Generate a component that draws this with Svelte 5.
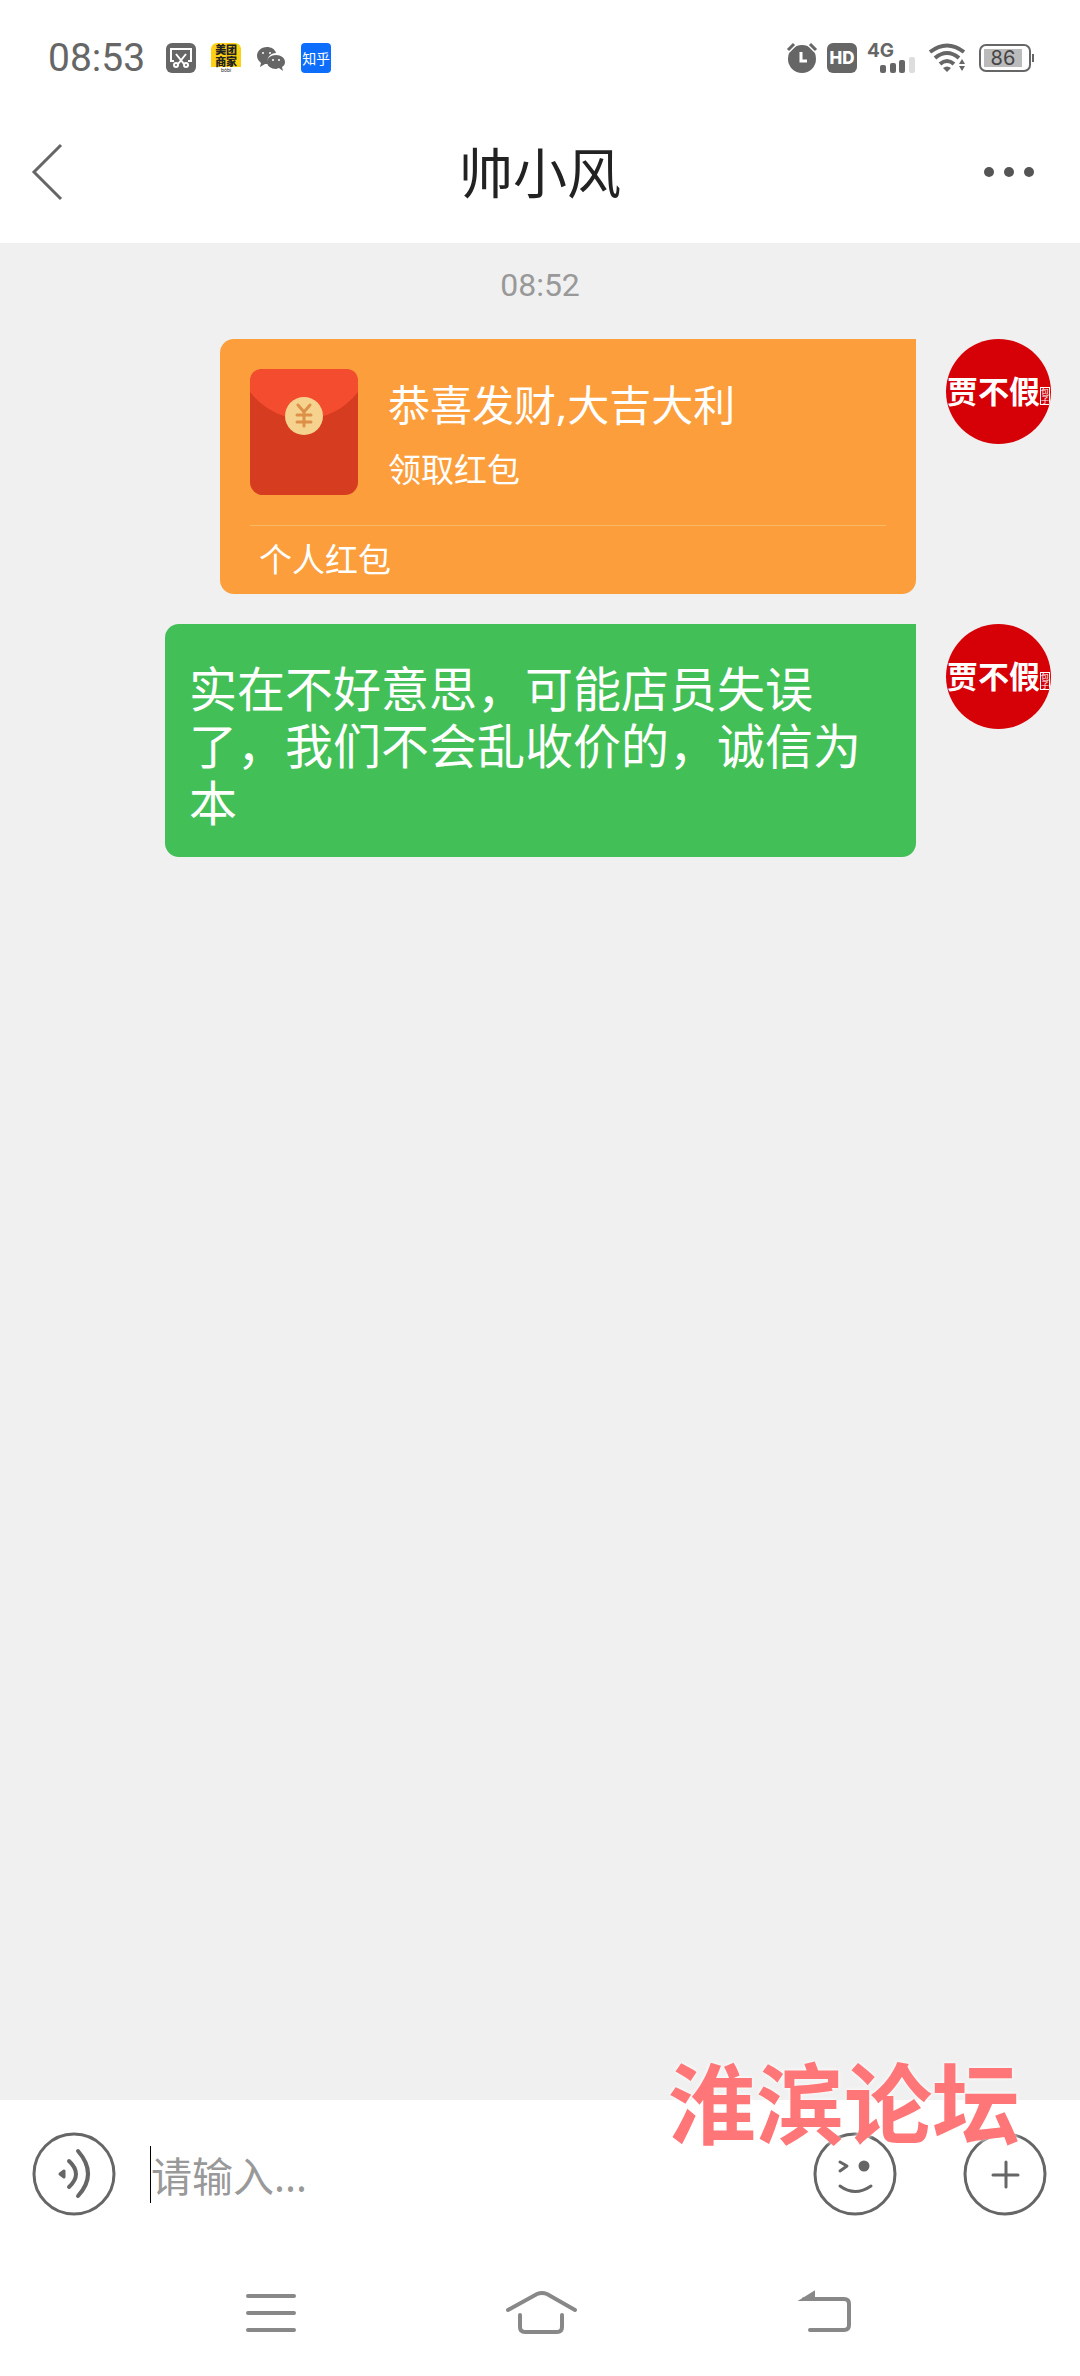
<script lang="ts">
	const contact = '帅小风';
	const message = '实在不好意思，可能店员失误了，我们不会乱收价的，诚信为本';

	let draft = $state('');
</script>

{#snippet avatar()}
	<div class="avatar">
		<span class="brand">贾不假</span>
		<span class="seal"><span>包</span><span>子</span></span>
	</div>
{/snippet}

<div class="phone">
	<div class="status">
		<span class="clock">08:53</span>
		<div class="notices">
			<svg width="30" height="30" viewBox="0 0 30 30">
				<rect width="30" height="30" rx="6" fill="#666" />
				<g fill="none" stroke="#fff" stroke-width="2">
					<path d="M8 18H5V6H25V18H22" />
					<path d="M10 11L18 21M20 11L12 21" />
					<circle cx="10" cy="22" r="2" />
					<circle cx="20" cy="22" r="2" />
				</g>
			</svg>
			<span class="yellow-app"><b>美团<br />商家</b><small>bóbi</small></span>
			<svg width="30" height="30" viewBox="0 0 30 30">
				<path fill="#666" d="M11 4C5 4 1 8 1 13c0 3 2 5 4 7l-1 4 5-3h3c-2-7 3-11 8-11C19 6 15 4 11 4z" />
				<path fill="#666" d="M20 12c-5 0-9 3-9 7s4 7 9 7l3-1 4 3-1-4c2-1 3-3 3-5 0-4-4-7-9-7z" />
				<g fill="#fff">
					<circle cx="7" cy="10" r="1" />
					<circle cx="14" cy="10" r="1" />
					<circle cx="17" cy="17" r="1" />
					<circle cx="23" cy="17" r="1" />
				</g>
			</svg>
			<span class="blue-app">知乎</span>
		</div>

		<div class="system">
			<svg width="30" height="32" viewBox="0 0 30 32">
				<circle cx="15" cy="17" r="14" fill="#666" />
				<path d="M1 8L7 2M29 8L23 2" stroke="#fff" stroke-width="6" />
				<path d="M1 8L7 2M29 8L23 2" stroke="#666" stroke-width="3" />
				<path d="M14 10V19H20" fill="none" stroke="#fff" stroke-width="3" />
			</svg>
			<span class="hd">HD</span>
			<svg class="signal" width="48" height="32" viewBox="0 0 48 32">
				<text x="0" y="15" font-size="19" font-weight="700" fill="#666">4G</text>
				<rect x="13" y="23" width="6" height="8" rx="2" fill="#666" />
				<rect x="23" y="21" width="6" height="10" rx="2" fill="#666" />
				<rect x="32" y="18" width="6" height="13" rx="2" fill="#666" />
				<rect x="42" y="15" width="6" height="16" rx="2" fill="#ddd" />
			</svg>
			<svg class="wifi" width="38" height="30" viewBox="0 0 38 30">
				<g fill="none" stroke="#666" stroke-width="4">
					<path d="M1 9Q18-4 35 9" />
					<path d="M6 15Q18 5 30 15" />
					<path d="M11 21Q18 15 25 21" />
				</g>
				<path fill="#666" d="M14 25q4-3 8 0l-4 4zM30 21l3-5 3 5zM30 23h6l-3 5z" />
			</svg>
			<span class="battery"><span class="level">86</span></span>
		</div>
	</div>

	<header>
		<button class="back" aria-label="返回">
			<svg width="34" height="60" viewBox="0 0 34 60">
				<path d="M31 2L4 29L31 56" fill="none" stroke="#666" stroke-width="3" />
			</svg>
		</button>
		<h1>{contact}</h1>
		<button class="more" aria-label="更多">
			<svg width="50" height="12" viewBox="0 0 50 12" fill="#555">
				<circle cx="5" cy="5" r="5" />
				<circle cx="25" cy="5" r="5" />
				<circle cx="45" cy="5" r="5" />
			</svg>
		</button>
	</header>

	<main>
		<time>08:52</time>

		<div class="row">
			<button class="packet">
				<span class="packet-top">
					<svg width="108" height="126" viewBox="0 0 108 126">
						<rect width="108" height="126" rx="13" fill="#d63c1f" />
						<path d="M0 23V13Q0 0 13 0H95Q108 0 108 13V23C80 59 28 59 0 23z" fill="#f44c2f" />
						<circle cx="54" cy="47" r="19" fill="#f6d28f" />
						<path
							d="M48 36L54 43L60 36M54 43V57M47 46H61M47 53H61"
							fill="none"
							stroke="#dd9048"
							stroke-width="3"
							stroke-linecap="round"
						/>
					</svg>
					<span class="packet-text">
						<span class="wish">恭喜发财,大吉大利</span>
						<span class="action">领取红包</span>
					</span>
				</span>
				<span class="kind">个人红包</span>
			</button>
			{@render avatar()}
		</div>

		<div class="row">
			<p class="bubble">{message}</p>
			{@render avatar()}
		</div>
	</main>

	<footer>
		<div class="watermark">淮滨论坛</div>
		<button aria-label="语音">
			<svg width="84" height="84" viewBox="0 0 84 84">
				<circle cx="42" cy="42" r="40" />
				<path class="solid" d="M28 42L32 39V45z" />
				<path d="M37 29Q51 42 37 55M46 19Q66 42 46 64" stroke-width="4" />
			</svg>
		</button>
		<label class="entry">
			<span class="caret"></span>
			<input type="text" placeholder="请输入..." aria-label="请输入" bind:value={draft} />
		</label>
		<button class="emoji" aria-label="表情">
			<svg width="84" height="84" viewBox="0 0 84 84">
				<circle cx="42" cy="42" r="40" />
				<path d="M27 30L34 34L27 39M27 54Q42 65 58 54" />
				<circle class="solid" cx="51" cy="34" r="4" />
			</svg>
		</button>
		<button aria-label="添加">
			<svg width="84" height="84" viewBox="0 0 84 84">
				<circle cx="42" cy="42" r="40" />
				<path d="M43 30V55M30 43H55" />
			</svg>
		</button>
	</footer>

	<nav>
		<button aria-label="最近任务">
			<svg width="72" height="46" viewBox="0 0 72 46">
				<path d="M20 7H66M20 24H66M20 41H66" />
			</svg>
		</button>
		<button aria-label="主页">
			<svg width="72" height="46" viewBox="0 0 72 46">
				<path d="M4 21L33 5Q38 3 43 5L71 21M16 26V38Q16 43 21 43H53Q58 43 58 38V26" />
			</svg>
		</button>
		<button aria-label="返回上一级">
			<svg width="72" height="46" viewBox="0 0 72 46">
				<path d="M24 10H64Q69 10 69 15V36Q69 41 64 41H30" />
				<path class="head" d="M21 11L34 3V11z" />
			</svg>
		</button>
	</nav>
</div>

<style>
	:global(body) {
		margin: 0;
	}
	.phone {
		min-height: 100vh;
		display: flex;
		flex-direction: column;
		background: #fff;
		font-family: 'Noto Sans', 'Noto Sans CJK SC', sans-serif;
	}
	button {
		padding: 0;
		border: 0;
		background: none;
		color: inherit;
		font: inherit;
	}
	svg {
		display: block;
		overflow: visible;
	}

	.status {
		display: flex;
		align-items: center;
		height: 116px;
		padding: 0 49px 0 48px;
		color: #666;
		font-family: Inter, sans-serif;
	}
	.clock {
		font-family: Roboto, sans-serif;
		font-size: 39px;
	}
	.notices,
	.system {
		display: flex;
		align-items: center;
	}
	.notices {
		gap: 15px;
		margin-left: 21px;
	}
	.yellow-app {
		display: flex;
		flex-direction: column;
		width: 30px;
		height: 30px;
		text-align: center;
		color: #222;
	}
	.yellow-app b {
		border-radius: 6px 6px 0 0;
		background: #fcd116;
		font: 900 11px/12px 'Noto Sans CJK SC', sans-serif;
	}
	.yellow-app small {
		font-size: 5px;
		line-height: 6px;
	}
	.blue-app {
		width: 30px;
		border-radius: 4px;
		background: #0d6efc;
		color: #fff;
		font: 14px/30px 'Noto Sans CJK SC', sans-serif;
		text-align: center;
	}
	.system {
		margin-left: auto;
		gap: 10px;
	}
	.hd {
		width: 30px;
		border-radius: 6px;
		background: #666;
		color: #fff;
		font-size: 17px;
		font-weight: 800;
		line-height: 30px;
		text-align: center;
	}
	.signal {
		margin-right: 4px;
	}
	.wifi {
		margin-right: 2px;
	}
	.battery {
		position: relative;
		box-sizing: border-box;
		width: 52px;
		height: 28px;
		padding: 3px;
		border: 2px solid #666;
		border-radius: 7px;
	}
	.battery::after {
		content: '';
		position: absolute;
		top: 8px;
		right: -5px;
		width: 2px;
		height: 8px;
		background: #666;
	}
	.level {
		display: block;
		width: 38px;
		background: #bbb;
		color: #444;
		font-size: 20px;
		line-height: 18px;
		text-align: center;
	}

	header {
		display: grid;
		grid-template-columns: 1fr auto 1fr;
		align-items: center;
		height: 113px;
		padding: 0 46px 14px 30px;
	}
	.back {
		justify-self: start;
	}
	.more {
		justify-self: end;
	}
	h1 {
		margin: 0;
		padding-left: 16px;
		color: #222;
		font-size: 54px;
		font-weight: 400;
		line-height: 80px;
	}

	main {
		flex: 1;
		display: flex;
		flex-direction: column;
		gap: 30px;
		padding: 18px 29px 20px 165px;
		background: #f0f0f0;
	}
	time {
		margin-left: -136px;
		color: #999;
		font-family: Roboto, sans-serif;
		font-size: 32px;
		line-height: 48px;
		text-align: center;
	}
	.row {
		display: flex;
		align-items: flex-start;
		justify-content: flex-end;
		gap: 30px;
	}
	.packet {
		width: 696px;
		padding: 30px 30px 0;
		border-radius: 14px 0 14px 14px;
		background: #fb9e3b;
		color: #fff;
		text-align: left;
	}
	.packet-top {
		display: flex;
		gap: 30px;
		padding-bottom: 30px;
		border-bottom: 1px solid #fdb866;
	}
	.packet-text {
		display: flex;
		flex-direction: column;
		padding-top: 6px;
	}
	.wish {
		font-size: 42px;
		line-height: 60px;
	}
	.action {
		padding-top: 10px;
		font-size: 33px;
		line-height: 50px;
	}
	.kind {
		display: block;
		padding-left: 9px;
		font-size: 33px;
		line-height: 68px;
	}
	.bubble {
		flex: 1;
		margin: 0;
		padding: 36px 24px 26px;
		border-radius: 14px 0 14px 14px;
		background: #43bf57;
		color: #fff;
		font-size: 48px;
		line-height: 57px;
	}

	.avatar {
		display: flex;
		flex: none;
		align-items: center;
		justify-content: center;
		width: 105px;
		height: 105px;
		border-radius: 50%;
		background: #d60007;
		color: #fff;
		overflow: hidden;
	}
	.brand {
		padding-bottom: 4px;
		font-size: 31px;
		font-weight: 700;
		white-space: nowrap;
	}
	.seal {
		display: flex;
		flex-direction: column;
		margin-top: 8px;
		border: 1px solid #fff;
		font-size: 8px;
		line-height: 8px;
	}

	footer {
		position: relative;
		display: flex;
		align-items: center;
		height: 148px;
		padding: 0 33px 0 32px;
	}
	footer svg {
		fill: none;
		stroke: #666;
		stroke-width: 3;
		stroke-linecap: round;
		stroke-linejoin: round;
	}
	footer .solid {
		fill: #666;
	}
	.emoji {
		margin-right: 66px;
	}
	.entry {
		display: flex;
		flex: 1;
		align-items: center;
		margin-left: 34px;
	}
	.caret {
		width: 1px;
		height: 57px;
		background: #000;
	}
	input {
		flex: 1;
		min-width: 0;
		padding: 3px 0 0;
		border: 0;
		outline: 0;
		background: none;
		color: #222;
		font: inherit;
		font-size: 41px;
		line-height: 60px;
	}
	input::placeholder {
		color: #999;
		opacity: 1;
	}
	.watermark {
		position: absolute;
		top: -56px;
		right: 60px;
		color: #ff7678;
		font-family: 'Noto Sans CJK SC', sans-serif;
		font-size: 88px;
		font-weight: 700;
		line-height: 110px;
		text-shadow: 0 0 4px #fff;
		pointer-events: none;
	}

	nav {
		display: flex;
		justify-content: center;
		gap: 204px;
		height: 128px;
	}
	nav svg {
		fill: none;
		stroke: #888;
		stroke-width: 4;
		stroke-linecap: round;
	}
	nav .head {
		fill: #888;
		stroke-width: 2;
	}
</style>
